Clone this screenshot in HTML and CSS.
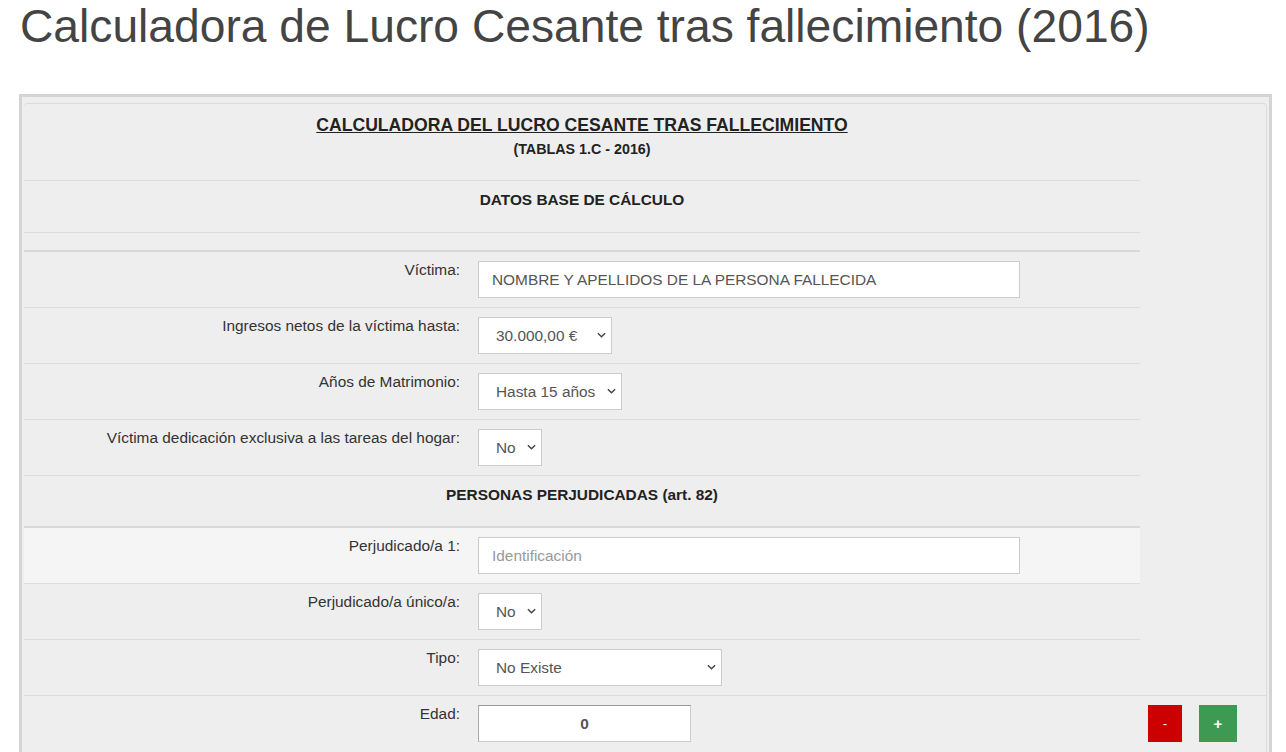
FILE: index.html
```html
<!DOCTYPE html>
<html lang="es">
<head>
<meta charset="utf-8">
<title>Calculadora de Lucro Cesante tras fallecimiento (2016)</title>
<link rel="stylesheet" href="styles.css">
</head>
<body>
<h1 class="page-title">Calculadora de Lucro Cesante tras fallecimiento (2016)</h1>
<div class="panel">
  <div class="panel-inner">
    <div class="head-block">
      <div class="head-title">CALCULADORA DEL LUCRO CESANTE TRAS FALLECIMIENTO</div>
      <div class="head-sub">(TABLAS 1.C - 2016)</div>
    </div>
    <div class="section-row">DATOS BASE DE CÁLCULO</div>
    <div class="spacer-row"></div>

    <div class="frow">
      <label class="flabel">Víctima:</label>
      <div class="fvalue"><input class="txt txt-wide" type="text" value="NOMBRE Y APELLIDOS DE LA PERSONA FALLECIDA"></div>
    </div>
    <div class="frow">
      <label class="flabel">Ingresos netos de la víctima hasta:</label>
      <div class="fvalue">
        <div class="sel sel-ingresos"><select><option>30.000,00 €</option></select><svg class="chev" viewBox="0 0 10 6"><path d="M1 1 L5 5 L9 1"/></svg></div>
      </div>
    </div>
    <div class="frow">
      <label class="flabel">Años de Matrimonio:</label>
      <div class="fvalue">
        <div class="sel sel-anios"><select><option>Hasta 15 años</option></select><svg class="chev" viewBox="0 0 10 6"><path d="M1 1 L5 5 L9 1"/></svg></div>
      </div>
    </div>
    <div class="frow">
      <label class="flabel">Víctima dedicación exclusiva a las tareas del hogar:</label>
      <div class="fvalue">
        <div class="sel sel-no"><select><option>No</option></select><svg class="chev" viewBox="0 0 10 6"><path d="M1 1 L5 5 L9 1"/></svg></div>
      </div>
    </div>

    <div class="section-row section-thick">PERSONAS PERJUDICADAS (art. 82)</div>

    <div class="frow frow-light">
      <label class="flabel">Perjudicado/a 1:</label>
      <div class="fvalue"><input class="txt txt-wide" type="text" placeholder="Identificación"></div>
    </div>
    <div class="frow">
      <label class="flabel">Perjudicado/a único/a:</label>
      <div class="fvalue">
        <div class="sel sel-no"><select><option>No</option></select><svg class="chev" viewBox="0 0 10 6"><path d="M1 1 L5 5 L9 1"/></svg></div>
      </div>
    </div>
    <div class="frow">
      <label class="flabel">Tipo:</label>
      <div class="fvalue">
        <div class="sel sel-tipo"><select><option>No Existe</option></select><svg class="chev" viewBox="0 0 10 6"><path d="M1 1 L5 5 L9 1"/></svg></div>
      </div>
    </div>
    <div class="frow frow-full">
      <label class="flabel">Edad:</label>
      <div class="fvalue"><input class="txt txt-edad" type="text" value="0"></div>
      <div class="fbtns">
        <button class="btn btn-minus" type="button">-</button>
        <button class="btn btn-plus" type="button">+</button>
      </div>
    </div>
  </div>
</div>
</body>
</html>
```

FILE: styles.css
```css
html, body {
  overflow: hidden;
}
body {
  margin: 0;
  background: #ffffff;
  font-family: "Liberation Sans", Arial, sans-serif;
  font-size: 15.4px;
  color: #333333;
}
.page-title {
  margin: 0;
  padding-left: 20px;
  font-size: 46.2px;
  line-height: 52px;
  font-weight: normal;
  color: #444444;
}
.panel {
  margin: 42px 14px 0 19px;
  border: 3px solid #d4d4d4;
  background: #eeeeee;
  padding: 6px 2px 0 2px;
  height: 700px;
}
.panel-inner {
  border-top: 1px solid #dcdcdc;
  border-right: 1px solid #dddddd;
  border-radius: 4px 4px 0 0;
  height: 100%;
}
.head-block,
.section-row,
.spacer-row,
.frow {
  width: 1116px;
}
.head-block {
  text-align: center;
  font-weight: bold;
  color: #222222;
  padding: 10px 0 21px;
  border-bottom: 1px solid #dcdcdc;
}
.head-title {
  font-size: 17.6px;
  line-height: 22px;
  text-decoration: underline;
}
.head-sub {
  font-size: 14.3px;
  line-height: 20px;
  margin-top: 3px;
}
.section-row {
  text-align: center;
  font-weight: bold;
  color: #222222;
  line-height: 20px;
  padding: 9px 0 22px;
  border-bottom: 1px solid #dcdcdc;
}
.section-thick {
  padding: 9px 0 21px;
  border-bottom: 2px solid #d8d8d8;
}
.spacer-row {
  height: 17px;
  border-bottom: 2px solid #d8d8d8;
}
.frow {
  display: grid;
  grid-template-columns: 444px 672px;
  border-bottom: 1px solid #dcdcdc;
  padding: 9px 0;
  height: 37px;
}
.frow-light {
  background: #f5f5f5;
}
.frow-full {
  width: auto;
  grid-template-columns: 444px 672px auto;
  border-bottom: none;
  border-top: 1px solid #dcdcdc;
  margin-top: -1px;
}
.flabel {
  text-align: right;
  padding-right: 8px;
  line-height: 18px;
  color: #333333;
}
.fvalue {
  padding-left: 10px;
}
.txt {
  box-sizing: border-box;
  height: 37px;
  border: 1px solid #cccccc;
  background: #ffffff;
  font-family: "Liberation Sans", Arial, sans-serif;
  font-size: 15.4px;
  color: #555555;
  padding: 0 13px;
  margin: 0;
  outline: none;
  display: block;
}
.txt::placeholder {
  color: #999999;
}
.txt-wide {
  width: 542px;
}
.txt-edad {
  width: 213px;
  text-align: center;
  font-weight: bold;
  border-top-color: #999999;
  border-left-color: #aaaaaa;
}
.sel {
  position: relative;
  height: 37px;
}
.sel select {
  appearance: none;
  -webkit-appearance: none;
  box-sizing: border-box;
  width: 100%;
  height: 37px;
  border: 1px solid #cccccc;
  border-radius: 0;
  background: #ffffff;
  font-family: "Liberation Sans", Arial, sans-serif;
  font-size: 15.4px;
  color: #555555;
  padding: 0 18px 0 17px;
  margin: 0;
  outline: none;
}
.chev {
  position: absolute;
  top: 15px;
  right: 6px;
  width: 9px;
  height: 6px;
  fill: none;
  stroke: #444444;
  stroke-width: 1.6;
  pointer-events: none;
}
.sel-ingresos { width: 134px; }
.sel-anios { width: 144px; }
.sel-no { width: 64px; }
.sel-tipo { width: 244px; }
.fbtns {
  display: flex;
  gap: 17px;
  padding-left: 8px;
}
.btn {
  height: 37px;
  border: none;
  color: #ffffff;
  font-family: "Liberation Sans", Arial, sans-serif;
  padding: 0;
  margin: 0;
}
.btn-minus {
  width: 34px;
  background: #cc0000;
  font-size: 12px;
}
.btn-plus {
  width: 38px;
  background: #3e9a52;
  font-size: 15px;
  font-weight: bold;
}
```
